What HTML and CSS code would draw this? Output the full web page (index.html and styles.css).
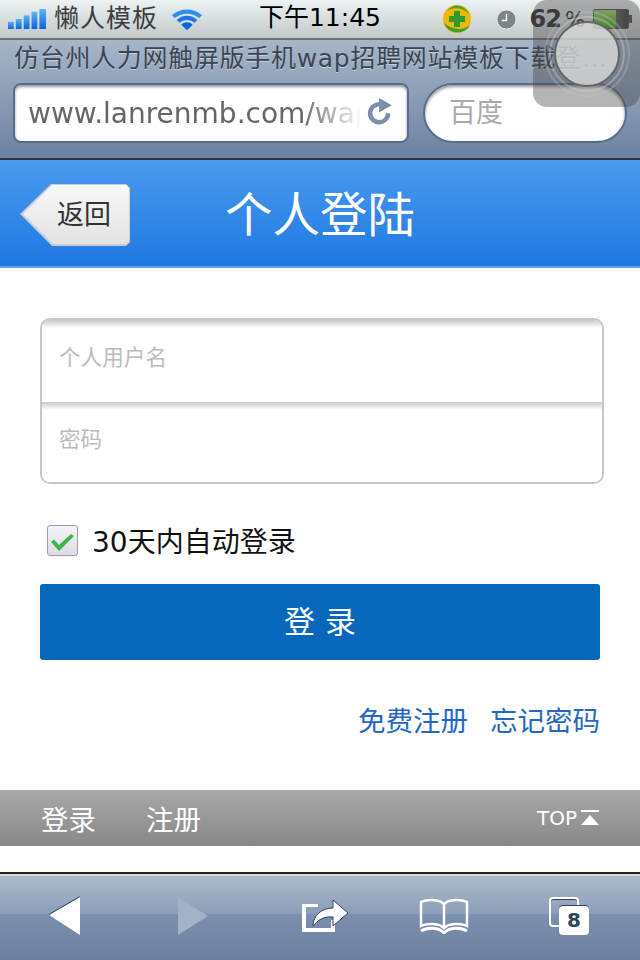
FILE: index.html
```html
<!DOCTYPE html>
<html>
<head>
    <meta charset="utf-8">
    <title>个人登陆</title>
    <link rel="stylesheet" href="styles.css">
</head>
<body>
    <div class="phone">
        <div class="status">
            <div class="status-left">
                <svg class="signal" width="38" height="20" viewBox="0 0 46 22" preserveAspectRatio="none">
                    <defs>
                        <linearGradient id="sig" x1="0" y1="0" x2="0" y2="1">
                            <stop offset="0" stop-color="#5cb4f5"/>
                            <stop offset="1" stop-color="#0a62e0"/>
                        </linearGradient>
                    </defs>
                    <rect x="0" y="14" width="7" height="8" fill="url(#sig)"/>
                    <rect x="9.500" y="11" width="7" height="11" fill="url(#sig)"/>
                    <rect x="19" y="7" width="7" height="15" fill="url(#sig)"/>
                    <rect x="28.500" y="3" width="7" height="19" fill="url(#sig)"/>
                    <rect x="38" y="0" width="8" height="22" fill="url(#sig)"/>
                </svg>
                <span class="carrier">懒人模板</span>
                <svg class="wifi" width="32" height="24" viewBox="0 0 34 24">
                    <path d="M1 8 C10 0 24 0 33 8 L30 11 C22 5 12 5 4 11 Z" fill="#2b8fee"/>
                    <path d="M6 13 C12 7 22 7 28 13 L25 16 C20 12 14 12 9 16 Z" fill="#1a78e8"/>
                    <path d="M11 18 C14 14.500 20 14.500 23 18 L17 24 Z" fill="#0a62e0"/>
                </svg>
            </div>
            <span class="clock">下午11:45</span>
            <div class="status-right">
                <svg class="guard" width="30" height="30" viewBox="0 0 30 30">
                    <circle cx="15" cy="15" r="14" fill="#f2b705"/>
                    <path d="M2 19 C5 30 23 32 28 21 C21 27 10 26 2 19 Z" fill="#3f9f2c"/>
                    <path d="M5 7 C10 -1 22 -1 28 11 C21 3 11 3 5 7 Z" fill="#4aa832"/>
                    <path d="M12 7 h6 v5 h5 v6 h-5 v5 h-6 v-5 h-5 v-6 h5 z" fill="#2f9a2a"/>
                </svg>
                <svg class="alarm" width="21" height="21" viewBox="0 0 22 22">
                    <circle cx="11" cy="11" r="10" fill="#7d8585" stroke="#e4e8e8"/>
                    <path d="M11 5 V12 H6" fill="none" stroke="#fff" stroke-width="1.500"/>
                </svg>
                <span class="percent">62<span class="percent-sign">%</span></span>
                <div class="battery"><div class="battery-fill"></div></div>
            </div>
        </div>

        <div class="browser">
            <div class="page-title">仿台州人力网触屏版手机wap招聘网站模板下载登...</div>
            <div class="browser-fields">
                <div class="url">
                    <span class="url-text">www.lanrenmb.com/wap</span>
                    <svg class="reload" width="26" height="27" viewBox="0 0 28 30">
                        <path d="M23 17 A10 10 0 1 1 14 7" fill="none" stroke="#7a8fab" stroke-width="5"/>
                        <path d="M13 0 L27 8 L13 16 Z" fill="#7a8fab"/>
                    </svg>
                </div>
                <div class="search">百度</div>
            </div>
        </div>

        <div class="header">
            <a class="back">返回</a>
            <h1>个人登陆</h1>
        </div>

        <div class="main">
            <div class="login-box">
                <div class="field">个人用户名</div>
                <div class="field">密码</div>
            </div>
            <div class="remember">
                <span class="check">
                    <svg width="24" height="22" viewBox="0 0 24 22">
                        <path d="M1 11 L4 8.500 L9 14 L21 3 L24 5 L9 20 Z" fill="#3eb54a"/>
                    </svg>
                </span>
                <span>30天内自动登录</span>
            </div>
            <a class="submit">登 录</a>
            <div class="links">
                <a>免费注册</a>
                <a>忘记密码</a>
            </div>
        </div>

        <div class="footer">
            <div class="footer-nav">
                <a>登录</a>
                <a>注册</a>
            </div>
            <div class="top">
                <span>TOP</span>
                <svg width="20" height="16" viewBox="0 0 20 16">
                    <rect x="1" y="0" width="18" height="2" fill="#fff"/>
                    <path d="M10 5 L19 15 H1 Z" fill="#fff"/>
                </svg>
            </div>
        </div>

        <div class="spacer"></div>

        <div class="toolbar">
            <svg width="34" height="40" viewBox="0 0 34 40" class="tool-back">
                <path d="M32 1 V39 L1 19 Z" fill="#fff"/>
                <path d="M32 1 L1 19 L1 18 L32 0 Z" fill="#33445c"/>
            </svg>
            <svg width="34" height="40" viewBox="0 0 34 40" class="tool-next">
                <path d="M2 1 V39 L32 20 Z" fill="#a3b2c6"/>
            </svg>
            <svg width="50" height="42" viewBox="0 0 50 42" class="tool-share">
                <path d="M2 9 H18 V12 H6 V33 H31 V25 H35 V37 H2 Z" fill="#fff"/>
                <path d="M13 31 C13 20 22 13 33 13 V5 L48 18 L33 31 V22 C24 21 18 25 13 31 Z" fill="#fff" stroke="#33445c" stroke-width="1"/>
            </svg>
            <svg width="50" height="36" viewBox="0 0 50 36" class="tool-book">
                <path d="M25 6 C20 1 8 1 2 4 V28 C8 25 20 25 25 30 C30 25 42 25 48 28 V4 C42 1 30 1 25 6 Z" fill="none" stroke="#fff" stroke-width="2.500"/>
                <path d="M25 6 V30" stroke="#fff" stroke-width="2.500"/>
                <path d="M2 33 C8 29 20 29 25 35 C30 29 42 29 48 33" fill="none" stroke="#fff" stroke-width="3"/>
            </svg>
            <div class="tabs">
                <div class="tab-back"></div>
                <div class="tab-front">8</div>
            </div>
        </div>

        <div class="assist">
            <div class="assist-ring">
                <div class="assist-ring-inner">
                    <div class="assist-dot"></div>
                </div>
            </div>
        </div>
    </div>
</body>
</html>
```

FILE: styles.css
```css
* {
    box-sizing: border-box;
}

body {
    margin: 0;
    font-family: "DejaVu Sans", "Noto Sans CJK SC", sans-serif;
    background-color: #fff;
}

h1 {
    margin: 0;
    font-weight: normal;
}

.phone {
    position: relative;
    width: 640px;
    height: 960px;
    overflow: hidden;
    display: flex;
    flex-direction: column;
}

/* status bar */
.status {
    height: 40px;
    display: flex;
    align-items: center;
    justify-content: space-between;
    padding: 0 8px 0 8px;
    background: linear-gradient(#edf2f4, #c3c8c9);
    border-bottom: 2px solid #6f7274;
}

.status-left,
.status-right {
    display: flex;
    align-items: center;
    width: 200px;
}

.status-right {
    justify-content: flex-end;
}

.carrier {
    margin-left: 8px;
    font-size: 25px;
    line-height: 30px;
    letter-spacing: 1px;
    white-space: nowrap;
    color: #3c3e40;
}

.wifi {
    margin-left: 13px;
}

.clock {
    margin-bottom: 3px;
    font-size: 25px;
    line-height: 30px;
    color: #000;
}

.guard {
    margin-right: 24px;
}

.alarm {
    margin-right: 13px;
}

.percent {
    font-size: 24px;
    line-height: 30px;
    font-weight: bold;
    letter-spacing: -1px;
    color: #333;
    white-space: nowrap;
}

.percent-sign {
    margin-left: 4px;
    font-size: 21px;
    font-weight: normal;
    letter-spacing: 0;
}

.battery {
    position: relative;
    width: 36px;
    height: 20px;
    margin: 0 3px 0 8px;
    border: 1px solid #555;
    border-radius: 2px;
    background: linear-gradient(90deg, #a0a0a0, #444);
}

.battery::after {
    content: "";
    position: absolute;
    top: 5px;
    right: -4px;
    width: 3px;
    height: 8px;
    background-color: #555;
}

.battery-fill {
    width: 22px;
    height: 18px;
    background: linear-gradient(#a8dc70, #4da62a);
}

/* browser chrome */
.browser {
    height: 120px;
    padding: 4px 0 0 13px;
    background: linear-gradient(#a7b6c9, #6d81a0);
    border-bottom: 2px solid #2c3342;
}

.page-title {
    margin-left: 1px;
    font-size: 25px;
    line-height: 30px;
    letter-spacing: 0.7px;
    color: #3b4452;
    text-shadow: 0 1px 0 #c6d0dc;
    white-space: nowrap;
    overflow: hidden;
}

.browser-fields {
    display: flex;
    gap: 14px;
    margin-top: 9px;
}

.url {
    width: 396px;
    height: 60px;
    display: flex;
    align-items: center;
    padding: 0 13px 0 13px;
    background-color: #fff;
    border: 2px solid #586d8d;
    border-radius: 8px;
    box-shadow: inset 0 2px 3px #999;
    overflow: hidden;
}

.url-text {
    width: 334px;
    flex: none;
    overflow: hidden;
    white-space: nowrap;
    font-size: 28px;
    color: #666;
    -webkit-mask-image: linear-gradient(90deg, #000 82%, transparent 100%);
    mask-image: linear-gradient(90deg, #000 82%, transparent 100%);
}

.reload {
    flex: none;
    margin: 0 0 4px 5px;
}

.search {
    width: 204px;
    height: 60px;
    padding-left: 24px;
    font-size: 27px;
    line-height: 56px;
    color: #aaa;
    background-color: #fff;
    border: 2px solid #586d8d;
    border-radius: 30px;
    box-shadow: inset 0 2px 3px #999;
}

/* page header */
.header {
    height: 108px;
    display: flex;
    align-items: center;
    padding: 4px 0 0 20px;
    background: linear-gradient(#4a9bed, #1f78e3);
    border-bottom: 2px solid #5f9fe8;
}

.back {
    position: relative;
    z-index: 0;
    width: 110px;
    height: 62px;
    padding-left: 37px;
    font-size: 27px;
    line-height: 62px;
    color: #333;
    background-color: #c9ced6;
    clip-path: polygon(31px 0, 106px 0, 110px 4px, 110px 58px, 106px 62px, 32px 62px, 0 30px);
}

.back::before {
    content: "";
    position: absolute;
    z-index: -1;
    top: 1px;
    right: 1px;
    bottom: 2px;
    left: 3px;
    background: linear-gradient(#f8f8f8, #e2e2e2);
    clip-path: polygon(29px 0, 103px 0, 106px 3px, 106px 56px, 103px 59px, 30px 59px, 0 29px);
}

.header h1 {
    margin: 0 0 8px 95px;
    font-size: 47.5px;
    color: #fff;
}

/* login form */
.main {
    height: 522px;
    padding: 50px 36px 0 40px;
    background-color: #fff;
}

.login-box {
    width: 564px;
    height: 166px;
    border: 2px solid #c8c8c8;
    border-radius: 10px;
    overflow: hidden;
}

.field {
    height: 82px;
    padding-left: 17px;
    font-size: 21.6px;
    line-height: 76px;
    color: #bbb;
    background: linear-gradient(#c8c8c8, #fff 8px);
}

.remember {
    display: flex;
    align-items: center;
    margin: 36px 0 0 7px;
    font-size: 28px;
    color: #111;
}

.check {
    width: 31px;
    height: 31px;
    margin-right: 14px;
    padding: 1px 0 0 2px;
    background: linear-gradient(#f4f4f8, #dcdce6);
    border: 1px solid #9a9ab4;
    border-radius: 3px;
}

.submit {
    display: block;
    width: 560px;
    height: 76px;
    margin-top: 24px;
    text-align: center;
    font-size: 31px;
    line-height: 76px;
    color: #fff;
    background-color: #0768bb;
    border-radius: 3px;
}

.links {
    display: flex;
    justify-content: flex-end;
    gap: 22px;
    width: 560px;
    margin-top: 39px;
    font-size: 27.5px;
    color: #2468c4;
}

/* footer */
.footer {
    height: 56px;
    display: flex;
    align-items: center;
    justify-content: space-between;
    padding: 0 40px 0 41px;
    color: #fff;
    background: linear-gradient(#a8a8a8, #888);
}

.footer-nav {
    display: flex;
    gap: 50px;
    font-size: 27.5px;
}

.top {
    display: flex;
    align-items: center;
    font-size: 20px;
    gap: 3px;
}

.spacer {
    height: 26px;
    background-color: #fff;
}

/* bottom toolbar */
.toolbar {
    flex: 1;
    position: relative;
    display: flex;
    align-items: center;
    padding: 0 0 2px 48px;
    background: linear-gradient(#b1bdcc, #8a9cb8 47%, #7b8fae 47%, #6c7f9e);
    border-top: 2px solid #222;
    box-shadow: inset 0 2px 0 #d5dae0;
}

.tool-next {
    margin-left: 94px;
}

.tool-share {
    margin-left: 90px;
}

.tool-book {
    margin-left: 69px;
}

.tabs {
    position: relative;
    width: 42px;
    height: 38px;
    margin-left: 80px;
}

.tab-back {
    width: 30px;
    height: 30px;
    border: 2px solid #fff;
    border-radius: 4px;
    box-shadow: inset 0 1px 0 #33445c;
}

.tab-front {
    position: absolute;
    top: 9px;
    left: 10px;
    width: 30px;
    height: 29px;
    text-align: center;
    font-size: 20px;
    font-weight: bold;
    line-height: 29px;
    color: #33445c;
    background-color: #fff;
    border-radius: 4px;
    box-shadow: 0 -1px 0 #33445c;
}

/* floating assistive button */
.assist {
    position: absolute;
    top: 0;
    right: 0;
    width: 107px;
    height: 107px;
    display: flex;
    align-items: center;
    justify-content: center;
    background-color: rgba(70, 70, 70, 0.4);
    border-radius: 14px;
}

.assist-ring {
    width: 86px;
    height: 86px;
    padding: 3px;
    border: 2px solid rgba(200, 200, 200, 0.3);
    border-radius: 50%;
}

.assist-ring-inner {
    width: 100%;
    height: 100%;
    padding: 3px;
    border: 2px solid rgba(220, 220, 220, 0.35);
    border-radius: 50%;
}

.assist-dot {
    width: 100%;
    height: 100%;
    border: 2px solid #666;
    border-radius: 50%;
    background-color: rgba(225, 225, 225, 0.75);
}
```
